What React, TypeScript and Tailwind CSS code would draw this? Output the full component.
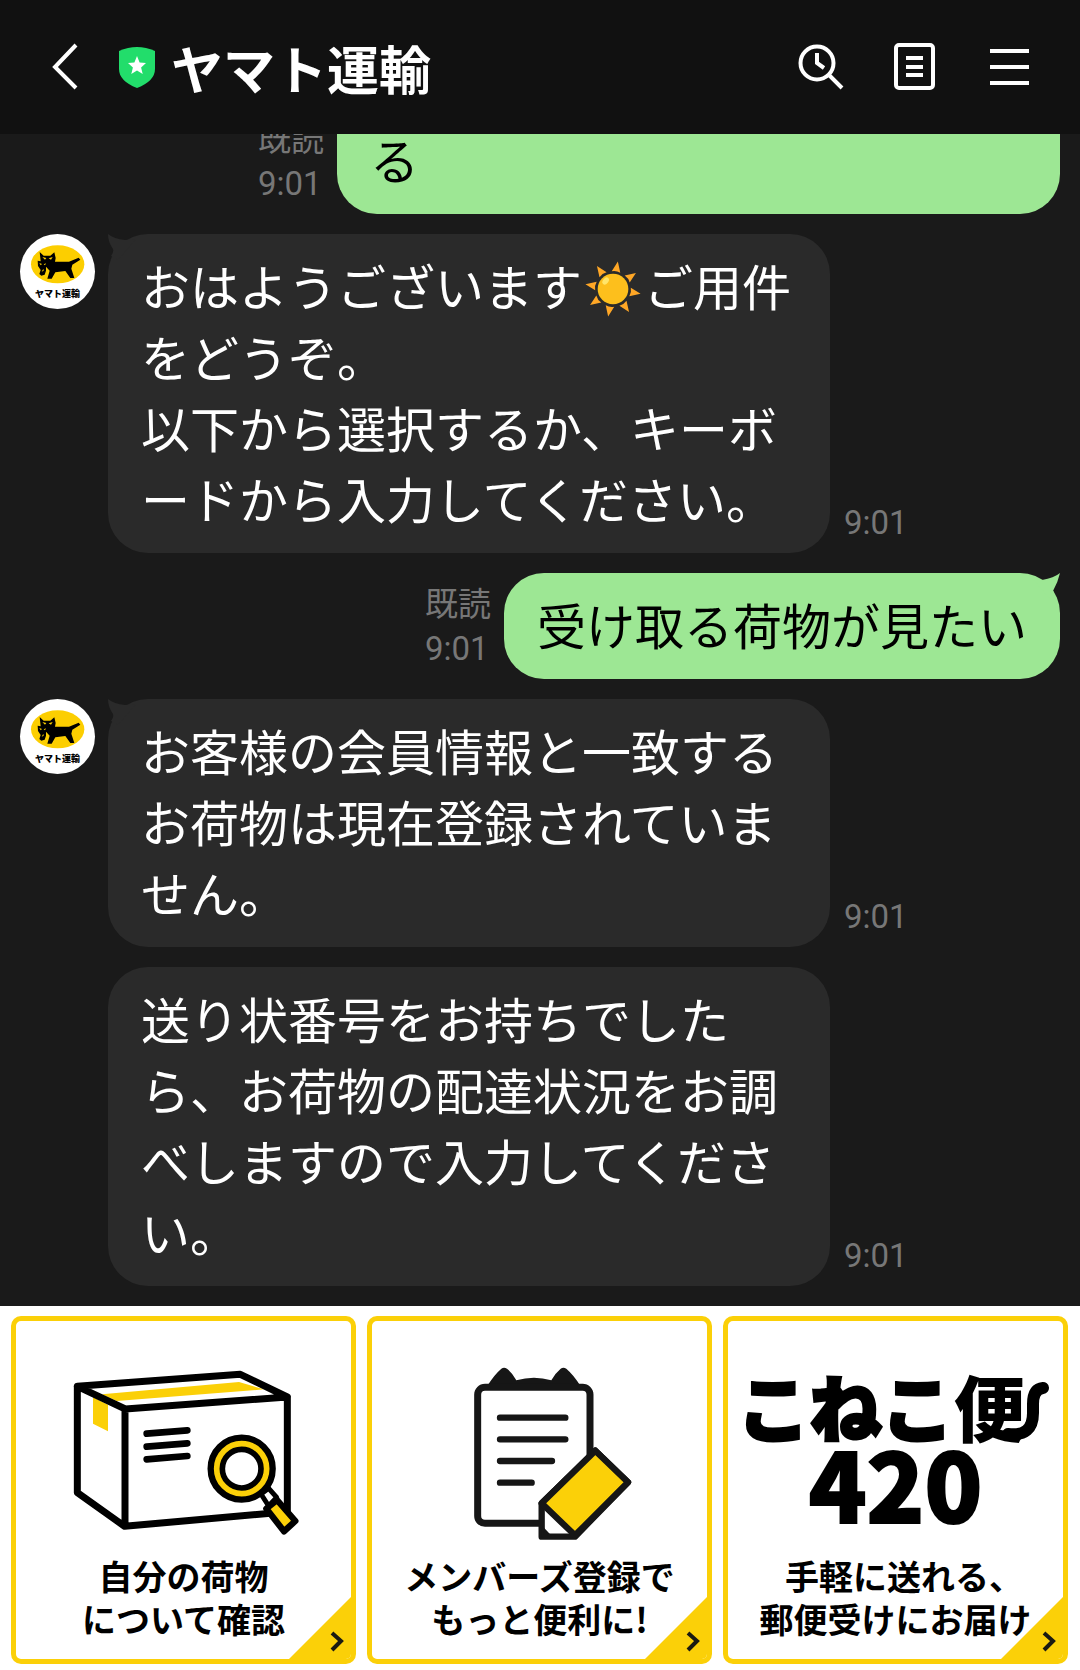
import type { ReactNode } from "react";

function Sun() {
  const rays = [10, 55, 100, 145, 190, 235, 280, 325];
  return (
    <svg role="img" aria-label="☀️" viewBox="0 0 168 168" className="mx-[3px] -mt-2 inline-block size-[56px] align-middle">
      {rays.map((angle) => (
        <path key={angle} d="M84 0 L97 32 Q84 27 71 32 Z" fill="#ffa726" transform={`rotate(${angle} 84 84)`} />
      ))}
      <circle cx="84" cy="84" r="46" fill="#fdbf1c" />
      <ellipse cx="62" cy="60" rx="8" ry="12" fill="#ffe56a" transform="rotate(40 62 60)" />
    </svg>
  );
}

function Avatar() {
  return (
    <div className="flex size-[75px] shrink-0 flex-col items-center overflow-hidden rounded-full bg-white">
      <svg viewBox="60 42 225 156" className="h-[52px] w-[75px]" aria-hidden="true">
        <ellipse cx="173" cy="133" rx="80" ry="57" fill="#fcce00" />
        <path
          d="M119 96 L131 107 H151 L163 97 L167 114 L165 125 H207 L236 113 L241 119 L217 134 L214 146 L223 174 H211 L196 153 L166 157 L155 176 H142 L149 152 L138 140 L138 152 L134 164 L124 167 L118 162 L122 150 L114 138 L113 122 L122 124 Z"
          fill="#000"
        />
        <path d="M127 111 l12 3 -4 5 z M146 115 l12 -4 -5 8 z M118 129 l8 3 -4 4 z M131 133 l7 -3 -3 6 z M130 146 l-5 9 6 -3 z" fill="#fcce00" />
      </svg>
      <span className="text-[9px] leading-[16px] font-black whitespace-nowrap text-black">ヤマト運輸</span>
    </div>
  );
}

function Meta({ read = false }: { read?: boolean }) {
  return (
    <div className="shrink-0 self-end pb-2 font-['Roboto','Noto_Sans_CJK_JP',sans-serif] text-[33px] leading-[44px] text-[#777777]">
      {read && <div>既読</div>}
      <time>9:01</time>
    </div>
  );
}

function Incoming({ avatar = false, children }: { avatar?: boolean; children: ReactNode }) {
  return (
    <div className="flex shrink-0 px-5">
      <div className="w-[88px] shrink-0">{avatar && <Avatar />}</div>
      <div className="relative flex-1 rounded-[40px] bg-[#2a2a2a] px-[33px] pt-[15px] pb-5 whitespace-pre text-white">
        {avatar && (
          <svg viewBox="0 0 36 36" className="absolute top-0 left-0 size-9" aria-hidden="true">
            <path d="M0 0 Q6 5 17 6 L28 5 L10 26 L3 22 Q6 18 5 15 Q0 8 0 0 Z" fill="#2a2a2a" />
          </svg>
        )}
        {children}
      </div>
      <div className="flex w-[230px] shrink-0 pl-[14px]">
        <Meta />
      </div>
    </div>
  );
}

function Card({ art, lines }: { art: ReactNode; lines: string[] }) {
  return (
    <a href="#" className="relative block overflow-hidden rounded-[10px] border-[5px] border-[#fbd008] bg-white pb-[19px]">
      {art}
      <p className="-mt-0.5 text-center text-[34px] leading-[43px] font-bold whitespace-pre text-black [font-feature-settings:'halt']">
        {lines.join("\n")}
      </p>
      <svg viewBox="0 0 62 62" className="absolute right-0 bottom-0 size-[62px]" aria-hidden="true">
        <path d="M62 0 V62 H0 Z" fill="#fbd008" />
        <path d="M43 36 L52 44 L43 53" fill="none" stroke="#1a1a12" strokeWidth="4" />
      </svg>
    </a>
  );
}

function BoxArt() {
  return (
    <svg viewBox="48 63 1005 705" className="block w-full" aria-hidden="true">
      <g fill="none" stroke="#000" strokeLinejoin="round" strokeLinecap="round">
        <path d="M306 283 L717 246 L792 268 L350 303 Z" fill="#fbd008" stroke="none" />
        <path d="M279 292 L324 314 V394 L279 371 Z" fill="#fbd008" stroke="none" />
        <path d="M232 259 L721 223 L862 291 L376 327 Z M232 259 V578 L374 679 L862 635 V291 M375 327 V679" strokeWidth="21" />
        <path d="M440 401 L562 391 M440 440 L562 430 M440 478 L562 468" strokeWidth="20" />
        <path d="M783 582 L806 565 L830 592 L806 618 Z" fill="#fff" strokeWidth="15" />
        <path d="M799 626 L831 600 L886 663 L852 694 Z" fill="#fbd008" strokeWidth="19" />
        <circle cx="725" cy="506" r="93" fill="#fbd008" strokeWidth="19" />
        <circle cx="725" cy="506" r="58" fill="#fff" strokeWidth="17" />
      </g>
    </svg>
  );
}

function ClipboardArt() {
  return (
    <svg viewBox="36 63 1005 705" className="block w-full" aria-hidden="true">
      <path d="M383 256 Q403 224 424 206 Q432 200 441 206 Q458 220 469 241 Q522 226 574 241 Q585 220 602 206 Q610 200 619 206 Q642 226 660 256 Z" fill="#161616" />
      <g fill="none" stroke="#161616" strokeLinejoin="round" strokeLinecap="round">
        <rect x="353" y="262" width="337" height="408" rx="22" fill="#fff" strokeWidth="21" />
        <path d="M420 353 H616 M420 418 H616 M420 483 H576 M420 548 H515" strokeWidth="19" />
        <path d="M545 610 L706 452 L804 547 L645 710 H545 Z" fill="#fff" strokeWidth="19" />
        <path d="M545 610 L706 452 L804 547 L645 706 Z" fill="#fbd008" strokeWidth="19" />
        <path d="M547 682 L571 708 H547 Z" fill="#161616" strokeWidth="6" />
      </g>
    </svg>
  );
}

function KonekoArt() {
  return (
    <div className="flex h-[235px] flex-col items-center pt-[45px] font-black text-black">
      <div className="relative mr-[28px] text-[72px] leading-[77px] whitespace-nowrap">
        <span className="[-webkit-text-stroke:3px_#000]">こねこ</span>便
        <svg viewBox="0 0 54 66" className="absolute right-[-24px] bottom-0 h-[66px] w-[54px]" aria-hidden="true">
          <path d="M12 57 Q37 60 37 36 V27 Q37 12 47 11" fill="none" stroke="#000" strokeWidth="12" strokeLinecap="round" />
        </svg>
      </div>
      <div className="text-[95px] leading-[77px] [-webkit-text-stroke:2px_#000]">420</div>
    </div>
  );
}

export default function App() {
  return (
    <div lang="ja" className="flex h-screen flex-col bg-[#1a1a1a] font-['Noto_Sans_CJK_JP',sans-serif]">
      <header className="flex h-[134px] shrink-0 items-center bg-[#111111] pr-[46px] pl-[49px] text-white">
        <button type="button" aria-label="戻る" className="mr-[38px]">
          <svg viewBox="0 0 32 48" className="h-12 w-8" fill="none" stroke="currentColor" strokeWidth="4">
            <path d="M27 2 L6 24 L27 45" />
          </svg>
        </button>
        <svg viewBox="0 0 36 41" className="mr-4 h-[41px] w-9" aria-hidden="true">
          <path d="M0 4 Q18 -4 36 4 V22 Q36 34 18 41 Q0 34 0 22 Z" fill="#22dd6b" />
          <path d="M18 9 L20.6 15.6 L27 16 L22.1 20.4 L23.7 27 L18 23.4 L12.3 27 L13.9 20.4 L9 16 L15.4 15.6 Z" fill="#fff" />
        </svg>
        <h1 className="flex-1 pt-0.5 text-[52px] leading-[60px] font-bold whitespace-nowrap">ヤマト運輸</h1>
        <div className="flex items-center gap-[47px]">
          <button type="button" aria-label="検索">
            <svg viewBox="0 0 48 48" className="size-12" fill="none" stroke="currentColor" strokeWidth="4">
              <circle cx="21" cy="20" r="16.5" />
              <path d="M32 31 L46 45 M21 10 V20 L28 25" />
            </svg>
          </button>
          <button type="button" aria-label="ノート">
            <svg viewBox="0 0 48 48" className="size-12" fill="none" stroke="currentColor" strokeWidth="4">
              <rect x="5" y="2" width="37" height="43" rx="3" />
              <path d="M15 15 H32 M15 24 H32 M15 32 H32" />
            </svg>
          </button>
          <button type="button" aria-label="メニュー">
            <svg viewBox="0 0 48 48" className="size-12" fill="none" stroke="currentColor" strokeWidth="4">
              <path d="M4 8 H43 M4 24 H43 M4 40 H43" />
            </svg>
          </button>
        </div>
      </header>

      <main className="flex min-h-0 flex-1 flex-col justify-end gap-5 overflow-hidden pb-5 text-[49px] leading-[71px]">
        <div className="flex shrink-0 gap-[13px] pr-5 pl-[258px]">
          <Meta read />
          <div className="flex-1 rounded-b-[40px] bg-[#9de794] px-[33px] pt-[60px] pb-5 text-black">る</div>
        </div>
        <Incoming avatar>
          おはようございます
          <Sun />
          {"ご用件\nをどうぞ。\n以下から選択するか、キーボ\nードから入力してください。"}
        </Incoming>
        <div className="flex shrink-0 justify-end gap-[13px] pr-5">
          <Meta read />
          <div className="relative rounded-[40px] bg-[#9de794] px-[33px] pt-[15px] pb-5 whitespace-nowrap text-black">
            <svg viewBox="0 0 36 36" className="absolute top-0 right-0 size-9" aria-hidden="true">
              <path d="M36 0 Q30 5 18 7 L8 5 L26 26 L31 23 L29 18 Q34 9 36 0 Z" fill="#9de794" />
            </svg>
            受け取る荷物が見たい
          </div>
        </div>
        <Incoming avatar>{"お客様の会員情報と一致する\nお荷物は現在登録されていま\nせん。"}</Incoming>
        <Incoming>{"送り状番号をお持ちでした\nら、お荷物の配達状況をお調\nべしますので入力してくださ\nい。"}</Incoming>
      </main>

      <nav aria-label="リッチメニュー" className="grid shrink-0 grid-cols-3 gap-[11px] bg-white pt-[10px] pr-[12px] pb-[6px] pl-[11px]">
        <Card art={<BoxArt />} lines={["自分の荷物", "について確認"]} />
        <Card art={<ClipboardArt />} lines={["メンバーズ登録で", "もっと便利に!"]} />
        <Card art={<KonekoArt />} lines={["手軽に送れる、", "郵便受けにお届け"]} />
      </nav>
    </div>
  );
}
